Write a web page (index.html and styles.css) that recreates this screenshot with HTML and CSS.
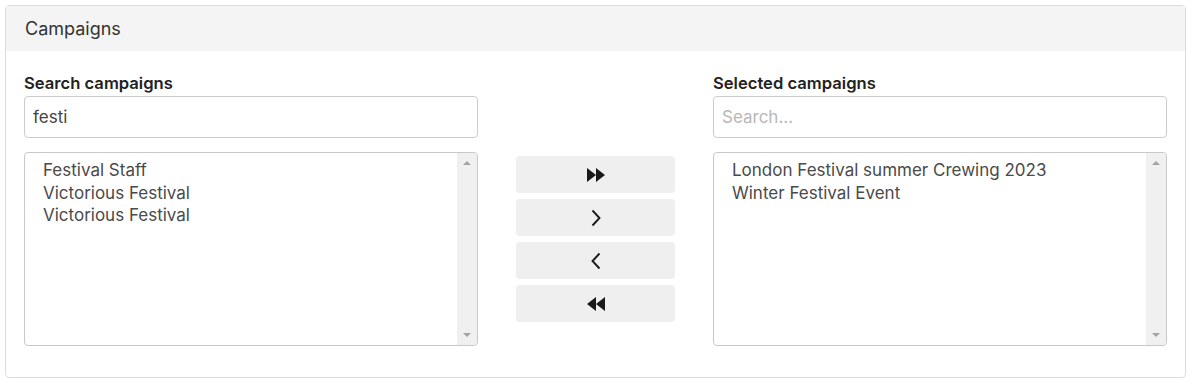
FILE: index.html
```html
<!DOCTYPE html>
<html lang="en">
<head>
    <meta charset="UTF-8">
    <title>Campaigns</title>
    <link rel="stylesheet" href="styles.css">
</head>
<body>
    <div class="card">
        <div class="card-header">Campaigns</div>
        <div class="card-body">
            <div class="pick-col">
                <label class="pick-label" for="search-left">Search campaigns</label>
                <input class="pick-input" type="text" id="search-left" value="festi">
                <div class="list-box">
                    <ul class="list-items">
                        <li>Festival Staff</li>
                        <li>Victorious Festival</li>
                        <li>Victorious Festival</li>
                    </ul>
                    <div class="scroll-bar">
                        <span class="arrow-up"></span>
                        <span class="arrow-down"></span>
                    </div>
                </div>
            </div>

            <div class="move-buttons">
                <button class="move-btn" title="Move all right">
                    <svg width="20" height="14" viewBox="0 0 20 14"><path d="M1 0 L10 7 L1 14 Z M10 0 L19 7 L10 14 Z" fill="#1a1a1a"/></svg>
                </button>
                <button class="move-btn" title="Move right">
                    <svg width="12" height="18" viewBox="0 0 12 18"><path d="M2.5 1.5 L9.5 9 L2.5 16.5" fill="none" stroke="#1a1a1a" stroke-width="1.9"/></svg>
                </button>
                <button class="move-btn" title="Move left">
                    <svg width="12" height="18" viewBox="0 0 12 18"><path d="M9.5 1.5 L2.5 9 L9.5 16.5" fill="none" stroke="#1a1a1a" stroke-width="1.9"/></svg>
                </button>
                <button class="move-btn" title="Move all left">
                    <svg width="20" height="14" viewBox="0 0 20 14"><path d="M19 0 L10 7 L19 14 Z M10 0 L1 7 L10 14 Z" fill="#1a1a1a"/></svg>
                </button>
            </div>

            <div class="pick-col">
                <label class="pick-label" for="search-right">Selected campaigns</label>
                <input class="pick-input" type="text" id="search-right" placeholder="Search...">
                <div class="list-box">
                    <ul class="list-items">
                        <li>London Festival summer Crewing 2023</li>
                        <li>Winter Festival Event</li>
                    </ul>
                    <div class="scroll-bar">
                        <span class="arrow-up"></span>
                        <span class="arrow-down"></span>
                    </div>
                </div>
            </div>
        </div>
    </div>
</body>
</html>
```

FILE: styles.css
```css
body {
    font-family: Inter, "Noto Sans", sans-serif;
    background-color: #fff;
    margin: 0;
    padding: 5px 1px 0 5px;
    color: #333;
}

.card {
    border: 1px solid #dcdcdc;
    border-radius: 4px;
    height: 373px;
    box-sizing: border-box;
}

.card-header {
    background-color: #f4f4f4;
    height: 45px;
    padding: 0 19px;
    font-size: 18px;
    line-height: 45px;
    color: #333;
}

.card-body {
    display: grid;
    grid-template-columns: 1fr 159px 1fr;
    column-gap: 38px;
    padding: 21px 18px 0 18px;
}

.pick-col {
    display: flex;
    flex-direction: column;
}

.pick-label {
    font-weight: 600;
    font-size: 16.6px;
    color: #222;
    line-height: 22px;
    margin-bottom: 2px;
}

.pick-input {
    height: 42px;
    border: 1px solid #ccc;
    border-radius: 4px;
    padding: 0 8px;
    font-family: inherit;
    font-size: 17px;
    color: #444;
    box-sizing: border-box;
    margin-bottom: 14px;
}

.pick-input::placeholder {
    color: #b8b8b8;
}

.list-box {
    display: flex;
    height: 194px;
    border: 1px solid #c8c8c8;
    border-radius: 4px;
    box-sizing: border-box;
    overflow: hidden;
}

.list-items {
    flex: 1;
    list-style: none;
    margin: 0;
    padding: 6px 18px;
    font-size: 17px;
    line-height: 22.5px;
    color: #4a4a4a;
}

.scroll-bar {
    width: 20px;
    background-color: #f0f0f0;
    display: flex;
    flex-direction: column;
    justify-content: space-between;
    align-items: center;
    padding: 8px 0;
}

.arrow-up {
    width: 0;
    height: 0;
    border-left: 4px solid transparent;
    border-right: 4px solid transparent;
    border-bottom: 4px solid #a3a3a3;
}

.arrow-down {
    width: 0;
    height: 0;
    border-left: 4px solid transparent;
    border-right: 4px solid transparent;
    border-top: 4px solid #a3a3a3;
}

.move-buttons {
    display: flex;
    flex-direction: column;
    gap: 6px;
    padding-top: 84px;
}

.move-btn {
    height: 37px;
    border: none;
    border-radius: 4px;
    background-color: #efefef;
    display: flex;
    align-items: center;
    justify-content: center;
    cursor: pointer;
}
```
